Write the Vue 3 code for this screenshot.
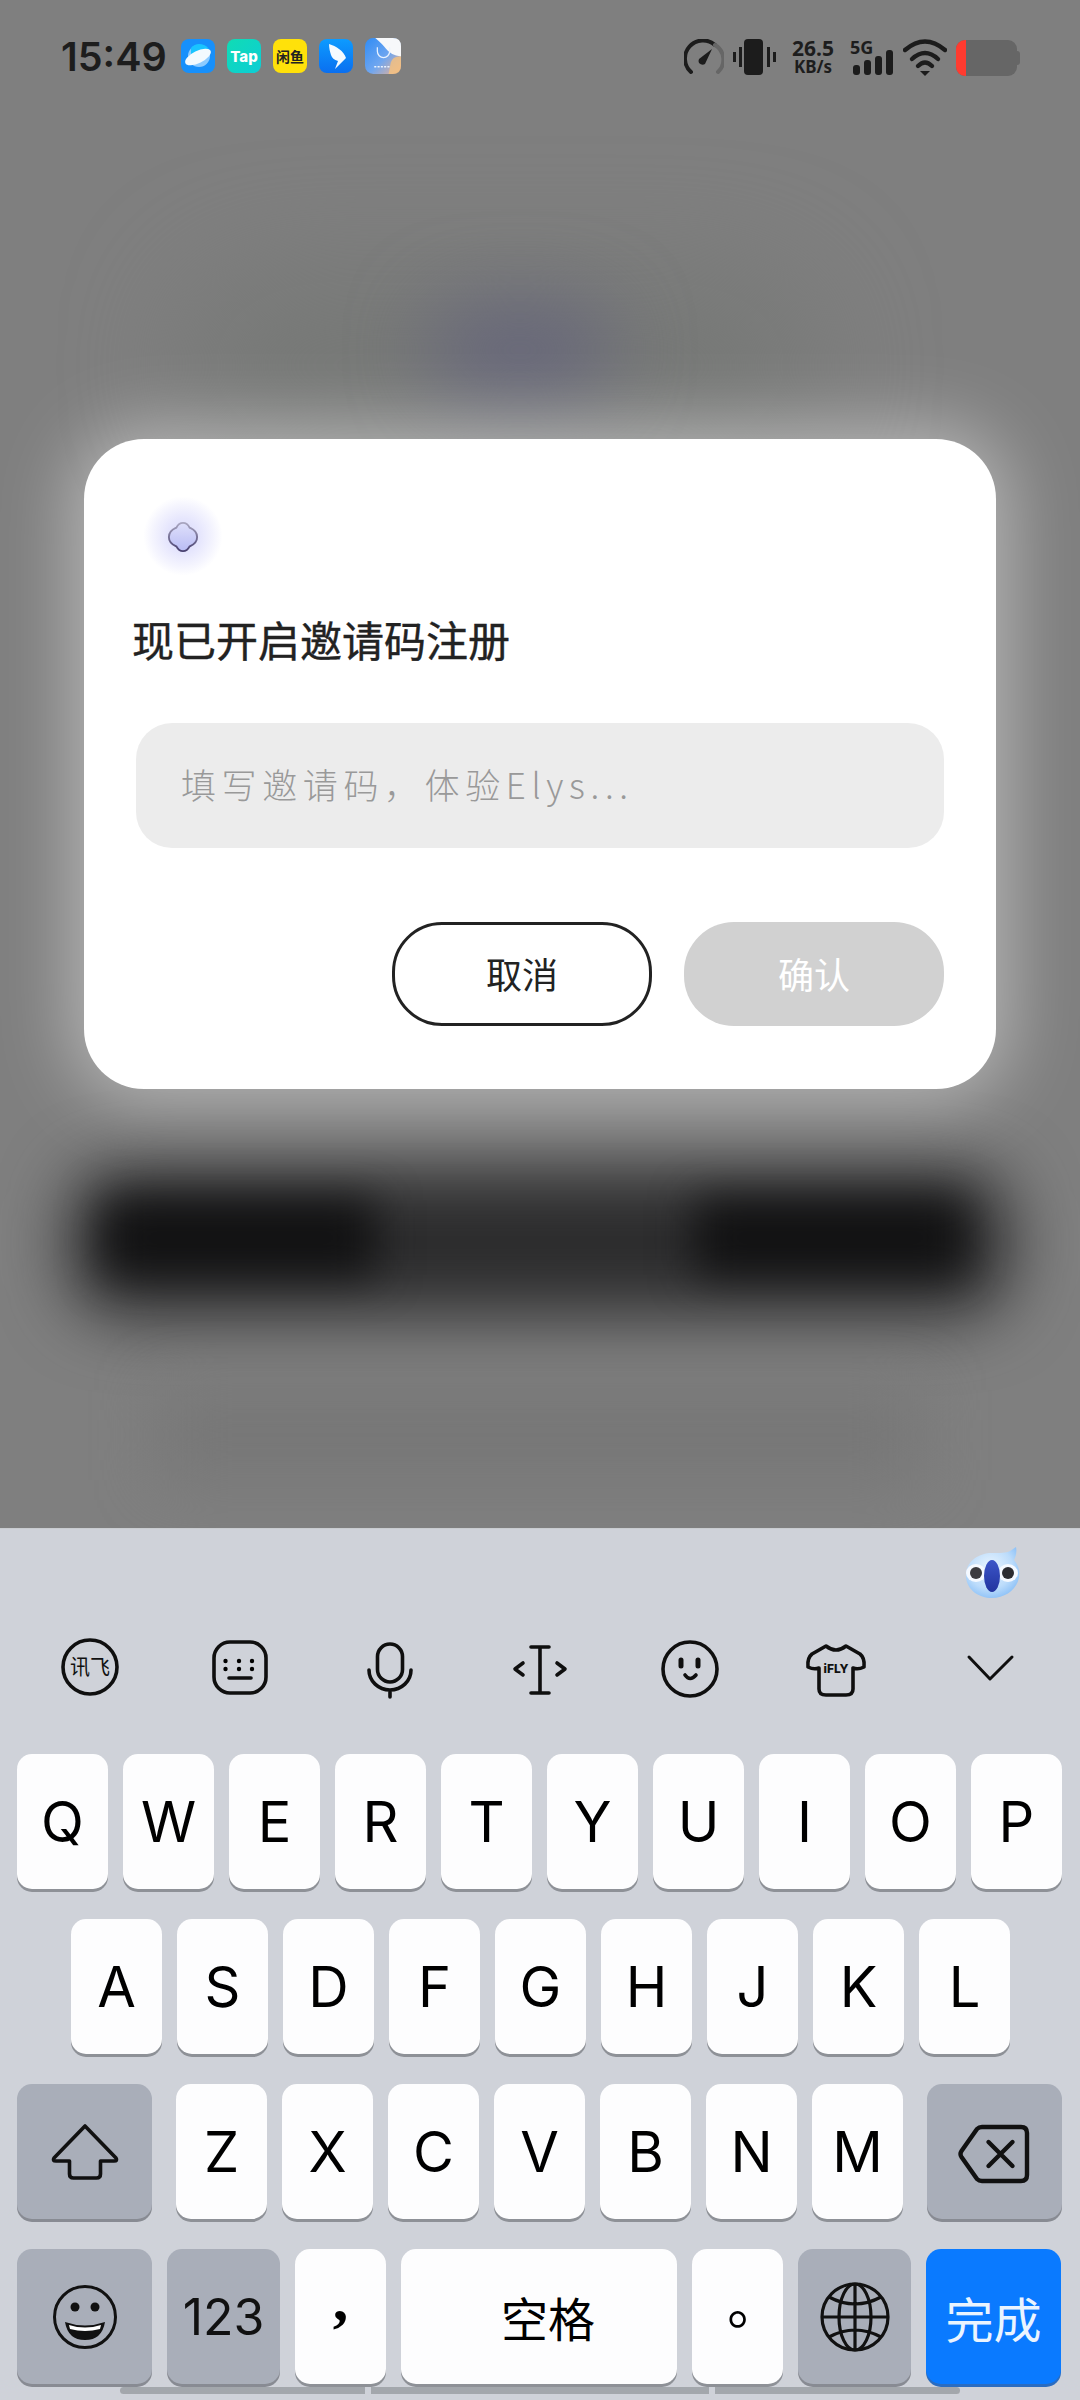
<template>
  <div class="screen">
    <!-- blurred page behind the dialog -->
    <div class="backdrop">
      <div class="blur-wash"></div>
      <div class="blur-purple"></div>
      <div class="blur-band"></div>
      <div class="blur-blob left"></div>
      <div class="blur-blob right"></div>
      <div class="blur-low"></div>
    </div>

    <div class="status-bar">
      <span class="time">15:49</span>
      <div class="app-icons">
        <svg class="app" viewBox="0 0 34 34">
          <rect width="34" height="34" rx="8" fill="#1790fb" />
          <circle cx="18" cy="17" r="11" fill="#8ccbff" />
          <path d="M10 9a11 11 0 0 1 19 4L10 15z" fill="#19c4ff" />
          <ellipse cx="17" cy="18" rx="14" ry="6" transform="rotate(-26 17 18)" fill="#f3fafe" />
        </svg>
        <svg class="app" viewBox="0 0 34 34">
          <defs>
            <linearGradient id="tapBg" x1="0" y1="0" x2="1" y2="1">
              <stop offset="0" stop-color="#10dcb4" />
              <stop offset="1" stop-color="#0dcdd6" />
            </linearGradient>
          </defs>
          <rect width="34" height="34" rx="8" fill="url(#tapBg)" />
          <text x="17" y="22.500" class="tap-text">Tap</text>
        </svg>
        <svg class="app" viewBox="0 0 34 34">
          <rect width="34" height="34" rx="8" fill="#ffe10a" />
          <text x="17" y="22.500" class="fish-text">闲鱼</text>
        </svg>
        <svg class="app" viewBox="0 0 34 34">
          <defs>
            <linearGradient id="wingBg" x1="0" y1="0" x2="0" y2="1">
              <stop offset="0" stop-color="#0d9bff" />
              <stop offset="1" stop-color="#0a6ff0" />
            </linearGradient>
          </defs>
          <rect width="34" height="34" rx="8" fill="url(#wingBg)" />
          <path d="M10 5c7 2 15 7 17 14L16 30l3-8c-4-1-6-3-7-6-1-3-2-7-2-11z" fill="#f4faff" />
        </svg>
        <svg class="app app-last" viewBox="0 0 35 35">
          <defs>
            <linearGradient id="lastBg" x1="0" y1="0" x2="1" y2="1">
              <stop offset="0" stop-color="#2f8cf5" />
              <stop offset="0.55" stop-color="#6fa6f0" />
              <stop offset="1" stop-color="#f5b38c" />
            </linearGradient>
          </defs>
          <rect width="35" height="35" rx="8" fill="url(#lastBg)" />
          <path d="M10 0h17q8 0 8 8v10q-10-1-15-8-3-4-10-10z" fill="#f7f8fa" />
          <path d="M33 18q-6 0-8 6l-2 11h4q8 0 8-8v-9z" fill="#f6c27e" opacity=".8" />
          <path d="M12 9v4a6 6 0 0 0 12 0V9" fill="none" stroke="#eaf3ff" stroke-width="1.2" />
          <path d="M9 28h16" stroke="#eaf3ff" stroke-width="1.4" stroke-dasharray="2 1.2" />
        </svg>
      </div>
      <div class="status-right">
        <svg class="speed" viewBox="0 0 40 36">
          <path d="M7 33A17 17 0 0 1 31 6" fill="none" stroke="#1c1c1c" stroke-width="4" stroke-linecap="round" />
          <path d="M31 6A17 17 0 0 1 34 33" fill="none" stroke="#666" stroke-width="4" stroke-linecap="round" />
          <path d="M15 20l13-10-7 15q-3 2-6-1-1-2 0-4z" fill="#1c1c1c" />
        </svg>
        <svg class="vibrate" viewBox="0 0 44 36">
          <rect x="12" y="0" width="19" height="36" rx="4" fill="#1c1c1c" />
          <rect x="1" y="13" width="3" height="10" fill="#1c1c1c" />
          <rect x="7" y="8" width="3" height="20" fill="#1c1c1c" />
          <rect x="35" y="8" width="3" height="20" fill="#1c1c1c" />
          <rect x="41" y="13" width="3" height="10" fill="#1c1c1c" />
        </svg>
        <div class="net-speed">
          <span class="net-num">26.5</span>
          <span class="net-unit">KB/s</span>
        </div>
        <svg class="signal" viewBox="0 0 44 36">
          <text x="0" y="15" class="five-g">5G</text>
          <rect x="3" y="26" width="7" height="10" rx="3" fill="#1c1c1c" />
          <rect x="14" y="21" width="7" height="15" rx="3" fill="#1c1c1c" />
          <rect x="25" y="17" width="7" height="19" rx="3" fill="#1c1c1c" />
          <rect x="36" y="11" width="7" height="25" rx="3" fill="#1c1c1c" />
        </svg>
        <svg class="wifi" viewBox="0 0 44 38">
          <path d="M2 11Q22-6 42 11" fill="none" stroke="#1c1c1c" stroke-width="4.4" stroke-linecap="round" />
          <path d="M9 20Q22 8 35 20" fill="none" stroke="#1c1c1c" stroke-width="4.4" stroke-linecap="round" />
          <path d="M15 27Q22 20 29 27" fill="none" stroke="#1c1c1c" stroke-width="4.4" stroke-linecap="round" />
          <path d="M17 32h10l-5 5z" fill="#1c1c1c" />
        </svg>
        <div class="battery">
          <div class="battery-body"><div class="battery-level"></div></div>
          <div class="battery-cap"></div>
        </div>
      </div>
    </div>

    <div class="dialog">
      <div class="logo">
        <svg viewBox="0 0 34 34" class="logo-mark">
          <defs>
            <linearGradient id="logoFill" x1="0" y1="0" x2="0" y2="1">
              <stop offset="0" stop-color="#dfe0fb" />
              <stop offset="1" stop-color="#b9bcf4" />
            </linearGradient>
            <linearGradient id="logoEdge" x1="0" y1="0" x2="0" y2="1">
              <stop offset="0" stop-color="#a9a6c0" />
              <stop offset="1" stop-color="#48406f" />
            </linearGradient>
          </defs>
          <path d="M17 2c4 0 6 3 7 5 2 1 8 3 8 10s-6 9-8 10c-1 2-3 5-7 5s-6-3-7-5c-2-1-8-3-8-10s6-9 8-10c1-2 3-5 7-5z" fill="url(#logoFill)" stroke="url(#logoEdge)" stroke-width="2" />
        </svg>
      </div>
      <h2 class="dialog-title">现已开启邀请码注册</h2>
      <div class="code-input"><span class="placeholder">填写邀请码，体验Elys...</span></div>
      <div class="dialog-actions">
        <button class="btn btn-cancel"><span class="btn-label">取消</span></button>
        <button class="btn btn-confirm"><span class="btn-label">确认</span></button>
      </div>
    </div>

    <div class="keyboard">
      <div class="mascot-row">
        <svg class="mascot" viewBox="0 0 54 52">
          <defs>
            <radialGradient id="mascotBody" cx="0.45" cy="0.4" r="0.7">
              <stop offset="0" stop-color="#eaf5ff" />
              <stop offset="0.6" stop-color="#bcdcfb" />
              <stop offset="1" stop-color="#7db8f6" />
            </radialGradient>
            <linearGradient id="mascotBeak" x1="0" y1="0" x2="0" y2="1">
              <stop offset="0" stop-color="#3c55c8" />
              <stop offset="1" stop-color="#22349f" />
            </linearGradient>
          </defs>
          <path d="M26 6c8 0 14 0 18-2l6-4c1 4 0 9-2 13 4 5 6 10 5 17-2 13-14 21-27 21S1 43 0 30C-1 15 12 6 26 6z" fill="url(#mascotBody)" />
          <ellipse cx="10" cy="26" rx="10" ry="9" fill="#f5f9ff" />
          <ellipse cx="42" cy="26" rx="10" ry="9" fill="#f5f9ff" />
          <circle cx="10" cy="26" r="6" fill="#3b3b40" />
          <circle cx="42" cy="26" r="6" fill="#2c2c31" />
          <ellipse cx="26" cy="29" rx="8" ry="16" fill="url(#mascotBeak)" />
        </svg>
      </div>

      <div class="toolbar">
        <div class="tool">
          <svg viewBox="0 0 60 60">
            <circle cx="30" cy="30" r="27" class="line" />
            <text x="30" y="37" class="xunfei" textLength="40" lengthAdjust="spacingAndGlyphs">讯飞</text>
          </svg>
        </div>
        <div class="tool">
          <svg viewBox="0 0 60 60">
            <rect x="4" y="5" width="52" height="51" rx="16" class="line" />
            <circle cx="15.5" cy="24" r="2.2" />
            <circle cx="29" cy="24" r="2.2" />
            <circle cx="42" cy="24" r="2.2" />
            <circle cx="15.5" cy="32" r="2.2" />
            <circle cx="29" cy="32" r="2.2" />
            <circle cx="42" cy="32" r="2.2" />
            <path d="M19 41h22" class="line" />
          </svg>
        </div>
        <div class="tool">
          <svg viewBox="0 0 60 60">
            <rect x="17.5" y="7" width="25" height="38" rx="12.5" class="line" />
            <path d="M9 33a21 20 0 0 0 42 0M30 53v7" class="line" />
          </svg>
        </div>
        <div class="tool">
          <svg viewBox="0 0 60 60">
            <path d="M13 26l-8 6 8 6M47 26l8 6-8 6M21 10h18M21 56h18M30 10v46" class="line" />
          </svg>
        </div>
        <div class="tool">
          <svg viewBox="0 0 60 60">
            <circle cx="30" cy="32" r="27" class="line" />
            <path d="M21 23v6M38 23v6" class="line thick" />
            <path d="M25 38q5 7 11 0" class="line" />
          </svg>
        </div>
        <div class="tool">
          <svg viewBox="4 0 60 60">
            <path d="M20 9q10 8 20 0l14 8q5 4 4 13-6 3-11 1v21q0 6-7 6H20q-7 0-7-6V31q-5 2-11-1-1-9 4-13z" class="line" />
            <text x="30" y="36" class="ifly">iFLY</text>
          </svg>
        </div>
        <div class="tool">
          <svg viewBox="0 0 60 60">
            <path d="M9 20l21 22 22-22" class="line thin" />
          </svg>
        </div>
      </div>

      <div class="rows">
        <div class="row">
          <button v-for="k in rowOne" :key="k" class="key">{{ k }}</button>
        </div>
        <div class="row row-two">
          <button v-for="k in rowTwo" :key="k" class="key">{{ k }}</button>
        </div>
        <div class="row row-three">
          <button class="key fn side">
            <svg class="shift" viewBox="0 0 70 60">
              <path d="M35 4L4 36q-2 3 2 3h13.500v13q0 4 4 4h23q4 0 4-4V39H64q4 0 2-3z" />
            </svg>
          </button>
          <div class="letters">
            <button v-for="k in rowThree" :key="k" class="key">{{ k }}</button>
          </div>
          <button class="key fn side">
            <svg class="backspace" viewBox="0 -2 80 68">
              <path d="M27 7h39q6 0 6 6v42q0 6-6 6H27q-3 0-5-2L6.500 37q-2-3 0-6L22 9q2-2 5-2z" />
              <path d="M33.500 22l24 24M57.500 22l-24 24" />
            </svg>
          </button>
        </div>
        <div class="row">
          <button class="key fn side">
            <svg class="emoji" viewBox="0 0 70 70">
              <circle cx="35" cy="35" r="30.500" fill="none" stroke="#111" stroke-width="3" />
              <circle cx="25" cy="25" r="4.500" fill="#111" />
              <circle cx="45" cy="25" r="4.500" fill="#111" />
              <path d="M15 40q20 7 40 0-3 18-20 18T15 40z" fill="#111" />
              <path d="M19 43q16 5 32 0l-1 4q-15 4-30 0z" fill="#fff" />
            </svg>
          </button>
          <button class="key fn mid num">123</button>
          <button class="key comma">,</button>
          <button class="key space">空格</button>
          <button class="key dot">。</button>
          <button class="key fn mid">
            <svg class="globe" viewBox="0 0 74 74">
              <circle cx="37" cy="37" r="33" />
              <ellipse cx="37" cy="37" rx="16" ry="33" />
              <path d="M37 4v66M4 37h66M11 17q26 14 52 0M11 57q26-14 52 0" />
            </svg>
          </button>
          <button class="key done side">完成</button>
        </div>
      </div>

      <div class="home-bar">
        <span class="seg seg-left"></span>
        <span class="seg seg-mid"></span>
        <span class="seg seg-right"></span>
      </div>
    </div>
  </div>
</template>

<script setup>
const rowOne = ['Q', 'W', 'E', 'R', 'T', 'Y', 'U', 'I', 'O', 'P']
const rowTwo = ['A', 'S', 'D', 'F', 'G', 'H', 'J', 'K', 'L']
const rowThree = ['Z', 'X', 'C', 'V', 'B', 'N', 'M']
</script>

<style>
html,
body {
  margin: 0;
  background: #7f7f7f;
}
</style>

<style scoped>
.screen {
  position: relative;
  width: 1080px;
  height: 2400px;
  overflow: hidden;
  display: flex;
  flex-direction: column;
  background: #7f7f7f;
  font-family: "Noto Sans CJK SC", "Noto Sans", sans-serif;
}

/* backdrop blobs */
.backdrop {
  position: absolute;
  inset: 0;
  overflow: hidden;
}

.backdrop div {
  position: absolute;
}

.blur-wash {
  left: 190px;
  top: 280px;
  width: 620px;
  height: 170px;
  border-radius: 85px;
  background: #767876;
  filter: blur(60px);
}

.blur-purple {
  left: 430px;
  top: 305px;
  width: 180px;
  height: 90px;
  border-radius: 45px;
  background: #66667a;
  filter: blur(40px);
}

.blur-band {
  left: 70px;
  top: 1170px;
  width: 940px;
  height: 145px;
  border-radius: 50px;
  background: #2c2c2d;
  filter: blur(34px);
}

.blur-blob {
  top: 1200px;
  width: 270px;
  height: 75px;
  background: #111112;
  filter: blur(22px);
}

.blur-blob.left {
  left: 105px;
}

.blur-blob.right {
  left: 695px;
}

.blur-low {
  left: 160px;
  top: 1390px;
  width: 760px;
  height: 90px;
  background: #777;
  filter: blur(30px);
}

/* status bar */
.status-bar {
  position: relative;
  display: flex;
  align-items: flex-start;
  height: 36px;
  padding-top: 39px;
  padding-left: 61px;
}

.time {
  width: 120px;
  font-family: Inter, sans-serif;
  font-size: 39.500px;
  font-weight: 600;
  line-height: 36px;
  color: #1d1d1d;
}

.app-icons {
  display: flex;
  gap: 12px;
}

.app {
  width: 34px;
  height: 34px;
}

.app-last {
  width: 36px;
  height: 36px;
  margin-top: -1px;
}

.tap-text {
  font-family: Inter, sans-serif;
  font-size: 15px;
  font-weight: 800;
  fill: #fff;
  text-anchor: middle;
}

.fish-text {
  font-size: 14px;
  font-weight: 700;
  fill: #222;
  text-anchor: middle;
}

.status-right {
  display: flex;
  margin-left: auto;
  margin-right: 60px;
}

.speed {
  width: 40px;
  height: 36px;
}

.vibrate {
  width: 44px;
  height: 36px;
  margin-left: 8px;
}

.net-speed {
  display: flex;
  flex-direction: column;
  align-items: center;
  width: 48px;
  margin-left: 13px;
  font-family: "Noto Sans", sans-serif;
  font-weight: 700;
  color: #1d1d1d;
}

.net-num {
  font-size: 21px;
  line-height: 19px;
}

.net-unit {
  font-size: 17px;
  line-height: 17px;
}

.signal {
  width: 44px;
  height: 36px;
  margin-left: 13px;
  overflow: visible;
}

.five-g {
  font-family: "Noto Sans", sans-serif;
  font-size: 18px;
  font-weight: 700;
  fill: #1d1d1d;
}

.wifi {
  width: 44px;
  height: 38px;
  margin-left: 9px;
}

.battery {
  display: flex;
  align-items: center;
  margin-left: 9px;
}

.battery-body {
  width: 61px;
  height: 36px;
  border-radius: 9px;
  background: #666;
  overflow: hidden;
}

.battery-level {
  width: 10px;
  height: 100%;
  background: #ff3b30;
}

.battery-cap {
  width: 3px;
  height: 14px;
  border-radius: 0 3px 3px 0;
  background: #666;
}

/* dialog */
.dialog {
  position: relative;
  width: 912px;
  margin: 364px 0 0 84px;
  padding: 57px 52px 63px;
  box-sizing: border-box;
  border-radius: 60px;
  background: #fff;
  box-shadow: 0 0 70px 14px rgba(255, 255, 255, 0.42);
}

.logo {
  display: flex;
  align-items: center;
  justify-content: center;
  width: 80px;
  height: 80px;
  margin-left: 7px;
  border-radius: 50%;
  background: radial-gradient(circle, #d9d9fb 0%, #e6e6fd 30%, #f5f5fe 55%, #fff 70%);
}

.logo-mark {
  width: 32px;
  height: 32px;
  margin-top: 2px;
}

.dialog-title {
  margin: 33px 0 0 -4px;
  font-size: 42px;
  font-weight: 400;
  line-height: 60px;
  color: #222;
  -webkit-text-stroke: 0.4px #222;
}

.code-input {
  display: flex;
  align-items: center;
  height: 125px;
  margin-top: 54px;
  padding-left: 45px;
  border-radius: 36px;
  background: #ececec;
  font-size: 35px;
  font-weight: 300;
  letter-spacing: 5.600px;
  color: #999;
}

.placeholder {
  margin-top: -5px;
}

.dialog-actions {
  display: flex;
  justify-content: flex-end;
  gap: 32px;
  margin-top: 74px;
}

.btn {
  width: 260px;
  height: 104px;
  border-radius: 50px;
  font-family: inherit;
  font-size: 36px;
  padding: 0;
}

.btn-label {
  display: block;
  margin-top: -2px;
}

.btn-cancel {
  border: 3px solid #222;
  background: #fff;
  color: #222;
}

.btn-confirm {
  border: none;
  background: #d1d1d1;
  color: #fff;
}

/* keyboard */
.keyboard {
  position: absolute;
  left: 0;
  right: 0;
  bottom: 0;
  height: 872px;
  box-sizing: border-box;
  border-top: 1px solid #c9ccd0;
  background: #cfd2d9;
}

.mascot-row {
  display: flex;
  justify-content: flex-end;
  padding: 18px 60px 0 0;
}

.mascot {
  width: 54px;
  height: 52px;
}

.toolbar {
  display: flex;
  margin-top: 38px;
  padding-left: 15px;
}

.tool {
  display: flex;
  justify-content: center;
  width: 150px;
  height: 60px;
}

.tool svg {
  width: 60px;
  height: 60px;
  overflow: visible;
}

.line {
  fill: none;
  stroke: #0f0f0f;
  stroke-width: 3.6;
  stroke-linecap: round;
  stroke-linejoin: round;
}

.line.thick {
  stroke-width: 5;
}

.line.thin {
  stroke-width: 3;
}

.xunfei {
  font-size: 21px;
  font-weight: 400;
  fill: #111;
  text-anchor: middle;
}

.ifly {
  font-family: Inter, sans-serif;
  font-size: 12px;
  font-weight: 800;
  fill: #111;
  text-anchor: middle;
}

.rows {
  display: flex;
  flex-direction: column;
  gap: 30px;
  margin-top: 57px;
}

.row {
  display: flex;
  gap: 15px;
  padding: 0 18px 0 17px;
}

.row-two {
  padding-left: 71px;
}

.row-three {
  gap: 24px;
}

.letters {
  display: flex;
  gap: 15px;
}

.key {
  display: flex;
  align-items: center;
  justify-content: center;
  flex: none;
  width: 91px;
  height: 135px;
  padding: 0;
  border: none;
  border-radius: 15px;
  background: #fdfdfe;
  box-shadow: 0 3px 0 #8e9197;
  font-family: Inter, sans-serif;
  font-size: 56px;
  font-weight: 400;
  color: #000;
}

.key.fn {
  background: #a9aeb9;
  box-shadow: 0 3px 0 #888b93;
}

.key.side {
  width: 135px;
}

.key.mid {
  width: 113px;
}

.key.num {
  font-size: 50px;
  color: #111;
}

.key.comma {
  align-items: flex-start;
  padding-top: 15px;
  box-sizing: border-box;
  font-family: "Liberation Serif", serif;
  font-size: 62px;
  font-weight: 700;
}

.key.space {
  width: 276px;
  padding-left: 18px;
  box-sizing: border-box;
  font-family: "Noto Sans CJK SC", sans-serif;
  font-size: 47px;
}

.key.dot {
  font-family: "Noto Sans CJK TC", sans-serif;
  font-size: 54px;
}

.key.done {
  background: #0a7aff;
  box-shadow: 0 3px 0 #2a6cc0;
  font-family: "Noto Sans CJK SC", sans-serif;
  font-size: 48px;
  color: #eaf4ff;
}

.shift {
  width: 70px;
  height: 60px;
  fill: none;
  stroke: #111;
  stroke-width: 3.6;
  stroke-linejoin: round;
}

.backspace {
  width: 80px;
  height: 68px;
  fill: none;
  stroke: #111;
  stroke-width: 4.4;
  stroke-linejoin: round;
  stroke-linecap: round;
}

.emoji {
  width: 70px;
  height: 70px;
}

.globe {
  width: 74px;
  height: 74px;
  fill: none;
  stroke: #111;
  stroke-width: 3.2;
}

.home-bar {
  display: flex;
  justify-content: center;
  gap: 6px;
  margin-top: 3px;
}

.seg {
  height: 7px;
  background: #a3a7ac;
}

.seg-left {
  width: 245px;
  border-radius: 4px 0 0 4px;
}

.seg-mid {
  width: 338px;
}

.seg-right {
  width: 245px;
  border-radius: 0 4px 4px 0;
}
</style>
